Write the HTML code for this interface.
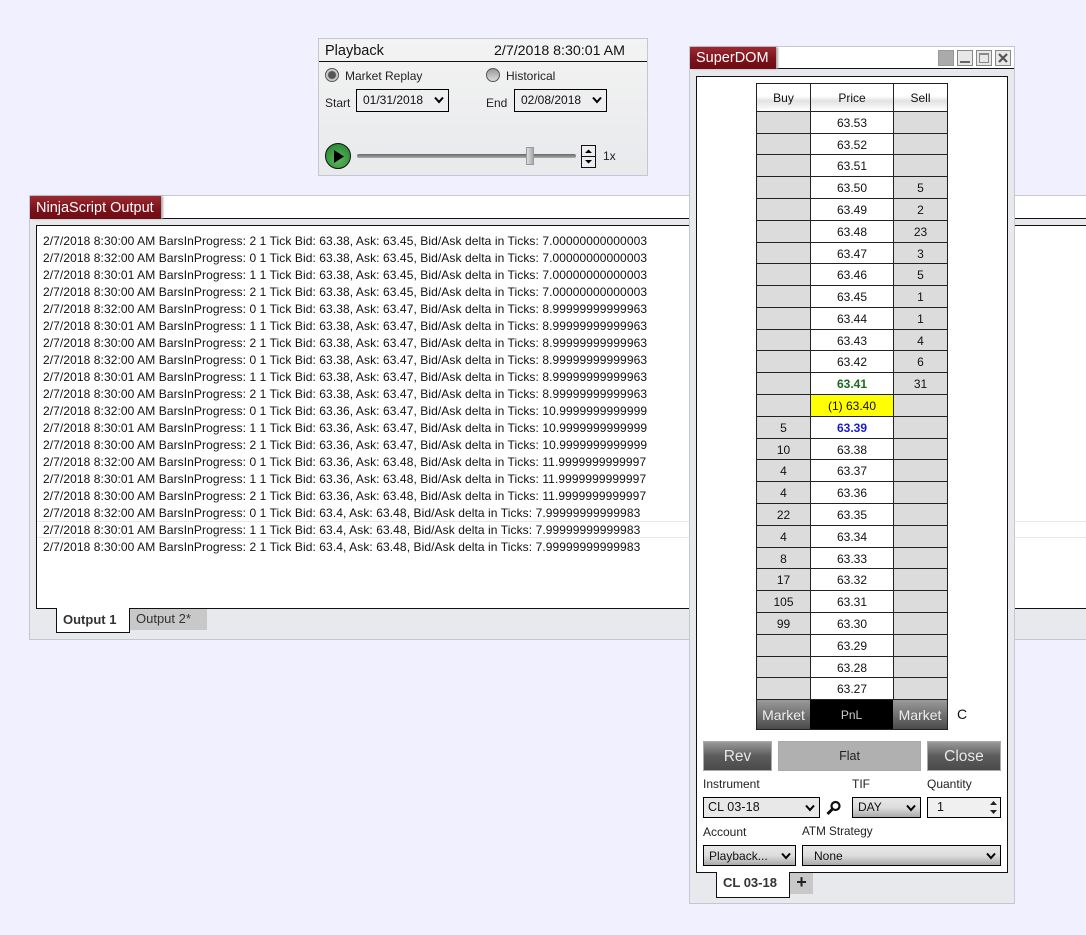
<!DOCTYPE html>
<html><head><meta charset="utf-8"><style>
html,body{margin:0;padding:0;width:1086px;height:935px;overflow:hidden;background:#f0f0ff}
body{position:relative;font-family:"Liberation Sans",sans-serif;color:#111}
div,span{position:absolute;box-sizing:border-box;white-space:nowrap}
.red{background:linear-gradient(#9a2a32,#7e141c 50%,#6f0c14);color:#fff;font-size:14.5px;text-align:left;padding-left:6px;box-shadow:2px 0 2px #aaa}
.l{left:43px;font-size:12px;line-height:17px;height:17px;letter-spacing:.083px}
.sel{border:1px solid #000;font-size:12.5px;line-height:20px;padding-left:5px;background:#ececec}
.sel svg{position:absolute;right:4px;top:6px}
.g{background:linear-gradient(#e8e8e8,#ddd 50%,#aaa)}
.lb{font-size:12px;line-height:14px;color:#222}
.btn{background:linear-gradient(#9a9a9a,#5c5c5c 50%,#4a4a4a);color:#e8e8e8;font-size:15.5px;text-align:center;border:1px solid #aaa;line-height:28px}
.r{left:756px;width:192px;height:23px;border:1px solid #222;background:#fff}
.b,.s{top:0;height:22px;background:#dcdcdc;font-size:12px;line-height:23px;text-align:center}
.b{left:0;width:53px}
.s{left:136px;width:54px;border-left:1px solid #222}
.p{left:53px;width:83px;top:0;height:22px;border-left:1px solid #222;font-size:12px;line-height:23px;text-align:center}
.h{font-size:12px;text-align:center;line-height:28px;background:linear-gradient(#fff 45%,#e2e2e2 62%,#fff);top:0;height:27px}
</style></head><body>

<!-- Playback -->
<div style="left:318px;top:38px;width:330px;height:138px;border:1px solid #c6c6d2;background:linear-gradient(#f3f3f3,#e8e9ec)"></div>
<div style="left:319px;top:61px;width:328px;height:1px;background:#111"></div>
<div style="left:325px;top:42px;font-size:14.5px;line-height:18px">Playback</div>
<div style="left:494px;top:42px;font-size:14.2px;line-height:18px">2/7/2018 8:30:01 AM</div>
<div style="left:325px;top:68px;width:14px;height:14px;border-radius:50%;border:1px solid #555;background:radial-gradient(#555 0 3.5px,#ccc 4.5px)"></div>
<div class="lb" style="left:345px;top:69px">Market Replay</div>
<div style="left:486px;top:68px;width:14px;height:14px;border-radius:50%;border:1px solid #555;background:linear-gradient(#999,#ddd)"></div>
<div class="lb" style="left:506px;top:69px">Historical</div>
<div class="lb" style="left:325px;top:96px">Start</div>
<div class="sel" style="left:356px;top:89px;width:93px;height:23px;background:none;font-size:12px;line-height:21px"><span style="left:6px">01/31/2018</span><svg width="10" height="8"><path d="M1 1.5L5 6L9 1.5" fill="none" stroke="#000" stroke-width="2"/></svg></div>
<div class="lb" style="left:486px;top:96px">End</div>
<div class="sel" style="left:514px;top:89px;width:93px;height:23px;background:none;font-size:12px;line-height:21px"><span style="left:6px">02/08/2018</span><svg width="10" height="8"><path d="M1 1.5L5 6L9 1.5" fill="none" stroke="#000" stroke-width="2"/></svg></div>
<div style="left:325px;top:143px;width:26px;height:26px;border-radius:50%;border:1px solid #111;background:radial-gradient(circle at 50% 65%,#5cb85c,#1f7d2c)"></div>
<svg style="position:absolute;left:334px;top:150px" width="11" height="13"><path d="M0 0L10 6.5L0 13Z" fill="#000"/></svg>
<div style="left:357px;top:154px;width:219px;height:4px;background:linear-gradient(#666,#aaa);border-radius:2px"></div>
<div style="left:526px;top:147px;width:8px;height:18px;background:linear-gradient(90deg,#ddd,#aaa);border:1px solid #999"></div>
<div style="left:581px;top:145px;width:15px;height:23px;border:1px solid #111;background:#eee"></div>
<div style="left:582px;top:156px;width:13px;height:1px;background:#111"></div>
<svg style="position:absolute;left:584px;top:148px" width="9" height="17"><path d="M1 5L4.500 1.500L8 5ZM1 12L4.500 15.500L8 12Z" fill="#000"/></svg>
<div class="lb" style="left:603px;top:149px">1x</div>

<!-- NinjaScript -->
<div style="left:29px;top:195px;width:1057px;height:445px;background:#e8e9ec;border:1px solid #c6c6d2;border-right:0"></div>
<div style="left:30px;top:196px;width:1056px;height:23px;background:#fff;border-bottom:1px solid #111"></div>
<div class="red" style="left:30px;top:196px;width:131px;height:23px;line-height:24px">NinjaScript Output</div>
<div style="left:36px;top:225px;width:1050px;height:384px;background:#fff;border:1px solid #111;border-right:0"></div>
<div style="left:37px;top:521px;width:1049px;height:1px;background:#e8e8e8"></div>
<div style="left:37px;top:537px;width:1049px;height:1px;background:#e8e8e8"></div>
<div class="l" style="top:233px">2/7/2018 8:30:00 AM BarsInProgress: 2 1 Tick Bid: 63.38, Ask: 63.45, Bid/Ask delta in Ticks: 7.00000000000003</div>
<div class="l" style="top:250px">2/7/2018 8:32:00 AM BarsInProgress: 0 1 Tick Bid: 63.38, Ask: 63.45, Bid/Ask delta in Ticks: 7.00000000000003</div>
<div class="l" style="top:267px">2/7/2018 8:30:01 AM BarsInProgress: 1 1 Tick Bid: 63.38, Ask: 63.45, Bid/Ask delta in Ticks: 7.00000000000003</div>
<div class="l" style="top:284px">2/7/2018 8:30:00 AM BarsInProgress: 2 1 Tick Bid: 63.38, Ask: 63.45, Bid/Ask delta in Ticks: 7.00000000000003</div>
<div class="l" style="top:301px">2/7/2018 8:32:00 AM BarsInProgress: 0 1 Tick Bid: 63.38, Ask: 63.47, Bid/Ask delta in Ticks: 8.99999999999963</div>
<div class="l" style="top:318px">2/7/2018 8:30:01 AM BarsInProgress: 1 1 Tick Bid: 63.38, Ask: 63.47, Bid/Ask delta in Ticks: 8.99999999999963</div>
<div class="l" style="top:335px">2/7/2018 8:30:00 AM BarsInProgress: 2 1 Tick Bid: 63.38, Ask: 63.47, Bid/Ask delta in Ticks: 8.99999999999963</div>
<div class="l" style="top:352px">2/7/2018 8:32:00 AM BarsInProgress: 0 1 Tick Bid: 63.38, Ask: 63.47, Bid/Ask delta in Ticks: 8.99999999999963</div>
<div class="l" style="top:369px">2/7/2018 8:30:01 AM BarsInProgress: 1 1 Tick Bid: 63.38, Ask: 63.47, Bid/Ask delta in Ticks: 8.99999999999963</div>
<div class="l" style="top:386px">2/7/2018 8:30:00 AM BarsInProgress: 2 1 Tick Bid: 63.38, Ask: 63.47, Bid/Ask delta in Ticks: 8.99999999999963</div>
<div class="l" style="top:403px">2/7/2018 8:32:00 AM BarsInProgress: 0 1 Tick Bid: 63.36, Ask: 63.47, Bid/Ask delta in Ticks: 10.9999999999999</div>
<div class="l" style="top:420px">2/7/2018 8:30:01 AM BarsInProgress: 1 1 Tick Bid: 63.36, Ask: 63.47, Bid/Ask delta in Ticks: 10.9999999999999</div>
<div class="l" style="top:437px">2/7/2018 8:30:00 AM BarsInProgress: 2 1 Tick Bid: 63.36, Ask: 63.47, Bid/Ask delta in Ticks: 10.9999999999999</div>
<div class="l" style="top:454px">2/7/2018 8:32:00 AM BarsInProgress: 0 1 Tick Bid: 63.36, Ask: 63.48, Bid/Ask delta in Ticks: 11.9999999999997</div>
<div class="l" style="top:471px">2/7/2018 8:30:01 AM BarsInProgress: 1 1 Tick Bid: 63.36, Ask: 63.48, Bid/Ask delta in Ticks: 11.9999999999997</div>
<div class="l" style="top:488px">2/7/2018 8:30:00 AM BarsInProgress: 2 1 Tick Bid: 63.36, Ask: 63.48, Bid/Ask delta in Ticks: 11.9999999999997</div>
<div class="l" style="top:505px">2/7/2018 8:32:00 AM BarsInProgress: 0 1 Tick Bid: 63.4, Ask: 63.48, Bid/Ask delta in Ticks: 7.99999999999983</div>
<div class="l" style="top:522px">2/7/2018 8:30:01 AM BarsInProgress: 1 1 Tick Bid: 63.4, Ask: 63.48, Bid/Ask delta in Ticks: 7.99999999999983</div>
<div class="l" style="top:539px">2/7/2018 8:30:00 AM BarsInProgress: 2 1 Tick Bid: 63.4, Ask: 63.48, Bid/Ask delta in Ticks: 7.99999999999983</div>
<div style="left:56px;top:608px;width:74px;height:25px;background:#fff;border:1px solid #111;border-top:0;font-size:13px;font-weight:bold;line-height:23px;padding-left:6px;color:#333">Output 1</div>
<div style="left:130px;top:609px;width:77px;height:21px;background:#c8c8c8;font-size:13px;line-height:20px;padding-left:6px;color:#333">Output 2*</div>

<!-- SuperDOM -->
<div style="left:689px;top:46px;width:326px;height:858px;background:#e8e9ec;border:1px solid #c6c6d2"></div>
<div style="left:690px;top:47px;width:324px;height:22px;background:#fff;border-bottom:1px solid #111"></div>
<div class="red" style="left:690px;top:47px;width:86px;height:22px;line-height:23px">SuperDOM</div>
<div style="left:938px;top:50px;width:16px;height:16px;background:#aaa;border:1px solid #999"></div>
<div style="left:957px;top:50px;width:16px;height:16px;background:#e8e8e8;border:1px solid #888"><div style="left:2px;top:10px;width:10px;height:2px;background:#666"></div></div>
<div style="left:976px;top:50px;width:16px;height:16px;background:#e8e8e8;border:1px solid #888"><div style="left:2px;top:2px;width:10px;height:10px;border:1px solid #888;border-top-width:2px"></div></div>
<div style="left:995px;top:50px;width:16px;height:16px;background:#e8e8e8;border:1px solid #888"></div>
<svg style="position:absolute;left:998px;top:53px" width="10" height="10"><path d="M1 1L9 9M9 1L1 9" stroke="#555" stroke-width="2.200"/></svg>
<div style="left:696px;top:76px;width:312px;height:797px;background:#fff;border:1px solid #111"></div>

<div class="r" style="top:83px;height:29px"><div class="h" style="left:0;width:53px">Buy</div><div class="h" style="left:53px;width:83px;border-left:1px solid #222">Price</div><div class="h" style="left:136px;width:54px;border-left:1px solid #222">Sell</div></div>

<div class="r" style="top:111px"><div class="b"></div><div class="p">63.53</div><div class="s"></div></div>
<div class="r" style="top:133px"><div class="b"></div><div class="p">63.52</div><div class="s"></div></div>
<div class="r" style="top:154px"><div class="b"></div><div class="p">63.51</div><div class="s"></div></div>
<div class="r" style="top:176px"><div class="b"></div><div class="p">63.50</div><div class="s">5</div></div>
<div class="r" style="top:198px"><div class="b"></div><div class="p">63.49</div><div class="s">2</div></div>
<div class="r" style="top:220px"><div class="b"></div><div class="p">63.48</div><div class="s">23</div></div>
<div class="r" style="top:242px"><div class="b"></div><div class="p">63.47</div><div class="s">3</div></div>
<div class="r" style="top:263px"><div class="b"></div><div class="p">63.46</div><div class="s">5</div></div>
<div class="r" style="top:285px"><div class="b"></div><div class="p">63.45</div><div class="s">1</div></div>
<div class="r" style="top:307px"><div class="b"></div><div class="p">63.44</div><div class="s">1</div></div>
<div class="r" style="top:329px"><div class="b"></div><div class="p">63.43</div><div class="s">4</div></div>
<div class="r" style="top:350px"><div class="b"></div><div class="p">63.42</div><div class="s">6</div></div>
<div class="r" style="top:372px"><div class="b"></div><div class="p" style="color:#1a6b1a;font-weight:bold">63.41</div><div class="s">31</div></div>
<div class="r" style="top:394px"><div class="b"></div><div class="p" style="background:#ff0">(1) 63.40</div><div class="s"></div></div>
<div class="r" style="top:416px"><div class="b">5</div><div class="p" style="color:#1a1ad0;font-weight:bold">63.39</div><div class="s"></div></div>
<div class="r" style="top:438px"><div class="b">10</div><div class="p">63.38</div><div class="s"></div></div>
<div class="r" style="top:459px"><div class="b">4</div><div class="p">63.37</div><div class="s"></div></div>
<div class="r" style="top:481px"><div class="b">4</div><div class="p">63.36</div><div class="s"></div></div>
<div class="r" style="top:503px"><div class="b">22</div><div class="p">63.35</div><div class="s"></div></div>
<div class="r" style="top:525px"><div class="b">4</div><div class="p">63.34</div><div class="s"></div></div>
<div class="r" style="top:547px"><div class="b">8</div><div class="p">63.33</div><div class="s"></div></div>
<div class="r" style="top:568px"><div class="b">17</div><div class="p">63.32</div><div class="s"></div></div>
<div class="r" style="top:590px"><div class="b">105</div><div class="p">63.31</div><div class="s"></div></div>
<div class="r" style="top:612px"><div class="b">99</div><div class="p">63.30</div><div class="s"></div></div>
<div class="r" style="top:634px"><div class="b"></div><div class="p">63.29</div><div class="s"></div></div>
<div class="r" style="top:656px"><div class="b"></div><div class="p">63.28</div><div class="s"></div></div>
<div class="r" style="top:677px;height:24px"><div class="b"></div><div class="p">63.27</div><div class="s"></div></div>

<div style="left:756px;top:699px;width:192px;height:31px;background:#000;border:1px solid #222"></div>
<div style="left:757px;top:700px;width:53px;height:29px;background:linear-gradient(#9a9a9a,#4a4a4a);color:#eee;font-size:14px;line-height:30px;text-align:center">Market</div>
<div style="left:810px;top:700px;width:83px;height:29px;color:#ccc;font-size:12px;line-height:30px;text-align:center">PnL</div>
<div style="left:893px;top:700px;width:54px;height:29px;background:linear-gradient(#9a9a9a,#4a4a4a);color:#eee;font-size:14px;line-height:30px;text-align:center">Market</div>
<div style="left:957px;top:706px;font-size:14px;line-height:17px">C</div>

<div class="btn" style="left:703px;top:741px;width:69px;height:30px;line-height:29px">Rev</div>
<div style="left:778px;top:741px;width:143px;height:30px;background:#b0b0b0;border:1px solid #aaa;font-size:12.5px;line-height:29px;text-align:center;color:#222">Flat</div>
<div class="btn" style="left:927px;top:741px;width:74px;height:30px;line-height:29px">Close</div>

<div class="lb" style="left:703px;top:777px">Instrument</div>
<div class="lb" style="left:852px;top:777px">TIF</div>
<div class="lb" style="left:927px;top:777px">Quantity</div>
<div class="sel" style="left:703px;top:797px;width:117px;height:21px;line-height:19px;font-size:12.5px;letter-spacing:.1px;background:#e8e8e8;padding-left:4px">CL 03-18<svg width="10" height="8"><path d="M1 1.500L5 6L9 1.500" fill="none" stroke="#000" stroke-width="2"/></svg></div>
<svg style="position:absolute;left:826px;top:800px" width="16" height="16"><circle cx="9.500" cy="6" r="4" fill="none" stroke="#111" stroke-width="2.200"/><path d="M6.500 9L1.500 14" stroke="#111" stroke-width="3"/></svg>
<div class="sel g" style="left:852px;top:797px;width:69px;height:21px;line-height:19px;font-size:12px">DAY<svg width="10" height="8"><path d="M1 1.500L5 6L9 1.500" fill="none" stroke="#000" stroke-width="2"/></svg></div>
<div class="sel" style="left:927px;top:797px;width:74px;height:21px;line-height:19px;font-size:12.5px;padding-left:9px;background:#f0f0f0">1</div>
<svg style="position:absolute;left:989px;top:799px" width="9" height="17"><path d="M1 6L4.500 2L8 6ZM1 11L4.500 15L8 11Z" fill="#222"/></svg>

<div class="lb" style="left:703px;top:825px">Account</div>
<div class="lb" style="left:802px;top:825px;font-size:11.7px">ATM Strategy</div>
<div class="sel g" style="left:703px;top:845px;width:93px;height:21px;line-height:20px;font-size:12px">Playback...<svg width="10" height="8"><path d="M1 1.500L5 6L9 1.500" fill="none" stroke="#000" stroke-width="2"/></svg></div>
<div class="sel g" style="left:802px;top:845px;width:199px;height:21px;line-height:20px;font-size:12px;padding-left:11px">None<svg width="10" height="8"><path d="M1 1.500L5 6L9 1.500" fill="none" stroke="#000" stroke-width="2"/></svg></div>

<div style="left:716px;top:872px;width:74px;height:26px;background:#fff;border:1px solid #111;border-top:0;font-size:13px;font-weight:bold;line-height:22px;padding-left:6px;color:#333">CL 03-18</div>
<div style="left:790px;top:873px;width:23px;height:21px;background:#c8c8c8;font-size:18px;font-weight:bold;line-height:19px;text-align:center;color:#222">+</div>
</body></html>
